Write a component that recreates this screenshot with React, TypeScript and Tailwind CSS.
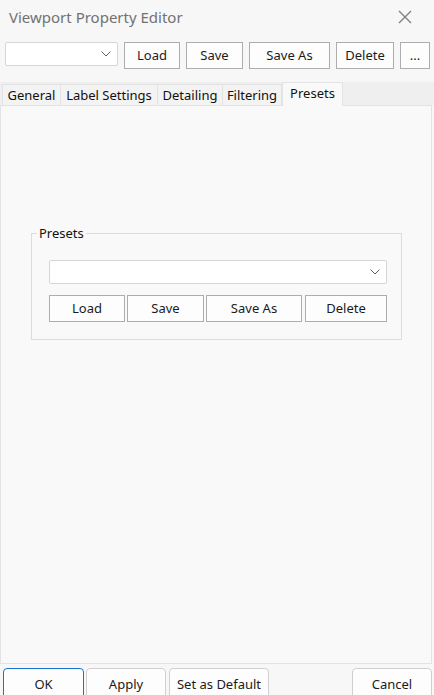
import React from "react";

const font = { fontFamily: '"Segoe UI", "Noto Sans", "Liberation Sans", sans-serif' };

function Chevron() {
  return (
    <svg width="10" height="6" viewBox="0 0 10 6" className="text-[#606060]">
      <path d="M0.5 0.5 L5 5 L9.5 0.5" fill="none" stroke="currentColor" strokeWidth="1" />
    </svg>
  );
}

function Btn({ w, children }: { w: string; children: React.ReactNode }) {
  return (
    <div
      className={`${w} h-full flex items-center justify-center border border-[#adadad] bg-[#fdfdfd] text-[13px] text-[#1b1b1b]`}
    >
      {children}
    </div>
  );
}

function Tab({ w, label, active }: { w: string; label: string; active?: boolean }) {
  if (active) {
    return (
      <div
        className={`${w} h-[24px] -mb-px flex items-start justify-center pt-[1px] border border-b-0 border-[#e3e3e3] bg-[#f9f9f9] text-[13px] text-[#111] z-10`}
      >
        {label}
      </div>
    );
  }
  return (
    <div
      className={`${w} h-[21px] flex items-center justify-center pt-[1px] border border-b-0 border-[#e3e3e3] bg-[#f3f3f3] text-[13px] text-[#111] -ml-px first:ml-0`}
    >
      {label}
    </div>
  );
}

function BottomBtn({ w, children, primary }: { w: string; children: React.ReactNode; primary?: boolean }) {
  return (
    <div
      className={`${w} h-[32px] flex items-start pt-[6px] justify-center rounded-t-[4px] border ${
        primary ? "border-[#1a73d1]" : "border-[#d0d0d0]"
      } bg-[#fdfdfd] text-[13px] text-[#1b1b1b]`}
    >
      {children}
    </div>
  );
}

export default function App() {
  return (
    <div className="w-[434px] h-[695px] bg-[#f7f7f7] flex flex-col overflow-hidden" style={font}>
      {/* Title bar */}
      <div className="shrink-0 h-[42px] flex items-start justify-between pl-[9px] pr-[22px] pt-[6px]">
        <span className="text-[15px] text-[#727272] leading-[22px]">Viewport Property Editor</span>
        <svg width="14" height="14" viewBox="0 0 14 14" className="mt-[4px]">
          <path d="M1 1 L13 13 M13 1 L1 13" stroke="#808080" strokeWidth="1.4" fill="none" />
        </svg>
      </div>

      {/* Toolbar */}
      <div className="shrink-0 h-[27px] flex items-start pl-[5px]">
        <div className="w-[113px] h-[24px] flex items-center justify-end pr-[6px] bg-white border border-[#d6d6d6] rounded-[2px]">
          <Chevron />
        </div>
        <div className="h-[27px] flex gap-[6px] ml-[6px]">
          <Btn w="w-[56px]">Load</Btn>
          <Btn w="w-[57px]">Save</Btn>
          <Btn w="w-[81px]">Save As</Btn>
          <Btn w="w-[58px]">Delete</Btn>
          <Btn w="w-[30px]">...</Btn>
        </div>
      </div>

      {/* Tab strip */}
      <div className="shrink-0 mt-[13px] h-[23px] bg-[#efefef] flex items-end pl-[2px]">
        <Tab w="w-[59px]" label="General" />
        <Tab w="w-[98px]" label="Label Settings" />
        <Tab w="w-[66px]" label="Detailing" />
        <Tab w="w-[60px]" label="Filtering" />
        <Tab w="w-[61px]" label="Presets" active />
      </div>

      {/* Content panel */}
      <div className="shrink-0 w-[432px] h-[559px] bg-[#f9f9f9] border border-[#e3e3e3]">
        <fieldset className="ml-[30px] mt-[119px] w-[371px] border border-[#dcdcdc] px-0 pt-[19px] pb-[17px]">
          <legend className="ml-[5px] px-[2px] text-[13px] leading-[16px] text-[#111]">Presets</legend>
          <div className="pl-[17px]">
            <div className="w-[338px] h-[24px] flex items-center justify-end pr-[6px] bg-white border border-[#d6d6d6] rounded-[2px]">
              <Chevron />
            </div>
            <div className="mt-[11px] h-[27px] flex">
              <Btn w="w-[76px]">Load</Btn>
              <div className="w-[2px]" />
              <Btn w="w-[77px]">Save</Btn>
              <div className="w-[2px]" />
              <Btn w="w-[96px]">Save As</Btn>
              <div className="w-[3px]" />
              <Btn w="w-[82px]">Delete</Btn>
            </div>
          </div>
        </fieldset>
      </div>

      {/* Bottom bar */}
      <div className="shrink-0 mt-[4px] flex pl-[3px]">
        <BottomBtn w="w-[81px]" primary>OK</BottomBtn>
        <div className="w-[2px]" />
        <BottomBtn w="w-[80px]">Apply</BottomBtn>
        <div className="w-[3px]" />
        <BottomBtn w="w-[100px]">Set as Default</BottomBtn>
        <div className="w-[83px]" />
        <BottomBtn w="w-[80px]">Cancel</BottomBtn>
      </div>
    </div>
  );
}
